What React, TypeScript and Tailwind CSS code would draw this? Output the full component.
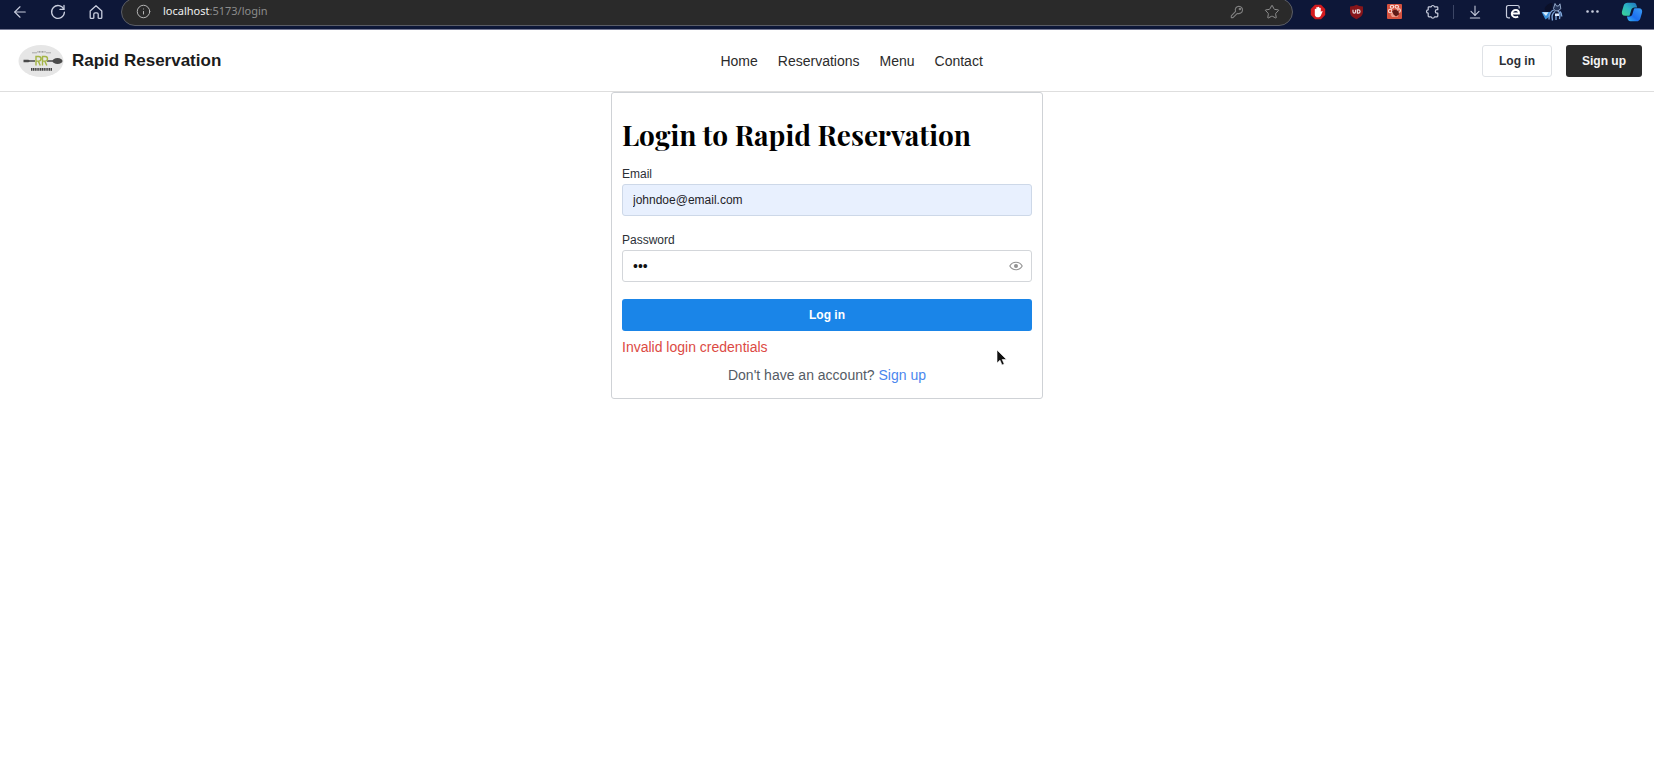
import { useState } from "react";
import type { ReactNode } from "react";
import { ArrowLeft, ArrowDownToLine, Ellipsis, Info, Star } from "lucide-react";

function ToolButton({ label, wide = false, children }: { label: string; wide?: boolean; children: ReactNode }) {
  return (
    <button
      type="button"
      aria-label={label}
      className={wide ? "flex w-10 shrink-0 items-center justify-center" : "flex w-[38px] shrink-0 items-center justify-center"}
    >
      {children}
    </button>
  );
}

function RefreshIcon() {
  return (
    <svg width="16" height="16" viewBox="0 0 16 16" fill="none" stroke="currentColor" strokeWidth="1.3" strokeLinecap="round" strokeLinejoin="round">
      <path d="M13.8 5.2A6.4 6.4 0 1 0 14.4 8.2" />
      <path d="M14 1.4v4h-4" />
    </svg>
  );
}

function HomeIcon() {
  return (
    <svg width="16" height="16" viewBox="0 0 16 16" fill="none" stroke="currentColor" strokeWidth="1.3" strokeLinejoin="round">
      <path d="M2.2 7 8 1.8 13.8 7v6.4a.9.9 0 0 1-.9.9h-2.1a.6.6 0 0 1-.6-.6v-3.4a1.4 1.4 0 0 0-1.4-1.4H7.2a1.4 1.4 0 0 0-1.4 1.4v3.4a.6.6 0 0 1-.6.6H3.1a.9.9 0 0 1-.9-.9z" />
    </svg>
  );
}

function KeyIcon() {
  return (
    <svg width="14" height="14" viewBox="0 0 14 14" fill="none" stroke="currentColor" strokeWidth="1.1" strokeLinejoin="round">
      <path d="M8.9 1.2a3.7 3.7 0 1 1-1.3 7.2L6.3 9.3 3 12.6H1.3V10.9L5.6 6.4A3.7 3.7 0 0 1 8.9 1.2z" />
      <circle cx="9.9" cy="4" r="0.7" />
    </svg>
  );
}

function EyeIcon() {
  return (
    <svg width="14" height="10" viewBox="0 0 14 10" fill="none" stroke="currentColor">
      <path d="M.8 5C2.2 2.500 4.400 1.300 7 1.300S11.800 2.500 13.200 5C11.800 7.500 9.600 8.700 7 8.700S2.200 7.500.8 5z" strokeWidth="1.100" />
      <circle cx="7" cy="5" r="2" fill="currentColor" stroke="none" />
    </svg>
  );
}

function HandIcon() {
  return (
    <svg width="16" height="16" viewBox="0 0 16 16">
      <path d="M5 .8h6L15.2 5v6L11 15.2H5L.8 11V5z" fill="#d31a1e" />
      <path d="M4.8 8.5V5.2a.8.8 0 0 1 1.5 0V3.6a.8.8 0 0 1 1.5 0V3.2a.8.8 0 0 1 1.5 0v1a.8.8 0 0 1 1.5 0V8l.8-.8c.5-.4 1.200 0 .9.600l-1.600 3.700c-.5 1.200-1.400 1.800-2.900 1.800C6 13.300 4.800 12 4.800 10.400z" fill="#fff" />
    </svg>
  );
}

function ShieldIcon() {
  return (
    <svg width="15" height="16" viewBox="0 0 15 16">
      <path d="M7.5.8C5.5 2 3.3 2.5 1 2.5v5c0 3.800 2.600 6 6.500 7.700C11.400 13.500 14 11.300 14 7.500v-5C11.700 2.500 9.500 2 7.500.8z" fill="#86151a" />
      <path d="M4 5.8v2a1.300 1.300 0 0 0 2.600 0v-2M8.400 5.800v3.300h1a1.650 1.650 0 0 0 0-3.300z" fill="none" stroke="#e8dada" strokeWidth="1.2" />
    </svg>
  );
}

function PawIcon() {
  return (
    <svg width="15" height="15" viewBox="0 0 15 15">
      <rect width="15" height="15" rx="1" fill="#d5523f" />
      <ellipse cx="5" cy="2.8" rx="1.7" ry="1.5" fill="none" stroke="#fbe3dc" strokeWidth="1.1" />
      <ellipse cx="9.8" cy="2.8" rx="1.7" ry="1.5" fill="none" stroke="#fbe3dc" strokeWidth="1.1" />
      <ellipse cx="3.2" cy="7" rx="1.7" ry="1.8" fill="none" stroke="#fbe3dc" strokeWidth="1.1" />
      <ellipse cx="12" cy="6.5" rx="1.4" ry="1.8" fill="none" stroke="#fbe3dc" strokeWidth="1.1" />
      <path d="M3.5 10.5 7 6l2-.5 3 4-1.5 3.500H5z" fill="#ef9d8c" />
      <path d="M5 7 8 5.500 11.500 7l.5 3.500-3 2L6.500 10.500z" fill="#5f1a16" />
    </svg>
  );
}

function PuzzleIcon() {
  return (
    <svg width="15" height="15" viewBox="0 0 15 15" fill="none" stroke="currentColor" strokeWidth="1.2" strokeLinejoin="round">
      <path d="M4 2.8h2.2a1.700 1.700 0 0 1 3.300 0H12a.8.8 0 0 1 .8.800v2.100H12a1.700 1.700 0 0 0 0 3.400h.8v2.900a.8.8 0 0 1-.8.800H9.500a1.700 1.700 0 0 1-3.300 0H4a.8.8 0 0 1-.8-.8V9.200a1.700 1.700 0 0 1 0-3.400V3.600A.8.8 0 0 1 4 2.800z" />
    </svg>
  );
}

function EdgeModeIcon() {
  return (
    <svg width="16" height="16" viewBox="0 0 16 16" fill="none">
      <path d="M5 13.8H3.2A1.700 1.700 0 0 1 1.500 12.100V3.200A1.700 1.700 0 0 1 3.200 1.500h9.300A1.700 1.700 0 0 1 14.200 3.200V4.500" stroke="#c9cede" strokeWidth="1.200" />
      <path d="M13.200 12.600c-3.200 1.400-6.400.3-6.400-2.500 0-2.300 1.800-4 4.100-4 2.100 0 3.300 1.200 3 3.300H7.800" stroke="#fff" strokeWidth="2" />
    </svg>
  );
}

function AvatarIcon() {
  return (
    <svg width="22" height="20" viewBox="0 0 22 20">
      <path d="M3.5 6.5C5 3 8 1 11.5 1L10 9 5 10z" fill="#0b1028" />
      <path d="M.6 10h8.900l-1.500 5-3.500 2.500z" fill="#3b92dd" />
      <path d="M1.500 10.300h6L5 14z" fill="#d5ecff" />
      <path d="M8 17.500c0-5 1.500-8.500 4.800-9.500M11.500 18.500c-1-4 0-7.500 2.500-9M15 13.500v4.500M18.500 17c.8-3.500.3-7-2-8.500M20.800 14.500c0-2-.6-4-1.800-5" fill="none" stroke="#7fa9dd" strokeWidth="1.3" />
      <path d="M12.500 6.500 14 1.500l1.500 2.500h2L19 1.800l.8 5-2.800 2h-3z" fill="#243458" stroke="#9fb6d6" strokeWidth=".9" />
      <path d="M14 11.500h4v2.500h-4z" fill="#dce9fa" />
    </svg>
  );
}

function CopilotIcon() {
  return (
    <svg width="22" height="20" viewBox="0 0 22 20">
      <defs>
        <linearGradient id="copilotLeft" x1="1" y1="0" x2="0" y2="1">
          <stop offset="0" stopColor="#1f6fc0" />
          <stop offset=".5" stopColor="#2bb5c4" />
          <stop offset="1" stopColor="#3cd58f" />
        </linearGradient>
        <linearGradient id="copilotRight" x1="1" y1="0" x2="0" y2="1">
          <stop offset="0" stopColor="#3b9df5" />
          <stop offset=".6" stopColor="#1c6ff0" />
          <stop offset="1" stopColor="#35b8f2" />
        </linearGradient>
      </defs>
      <path d="M6.500.8h6c2 0 2.700 1.200 3.200 3.200l.5 1.600h-2.700c-1.800 0-2.800 1-3.400 2.800L8.500 13.800H4.200c-2.700 0-3.900-2-3.200-4.600L2.700 3.600C3.300 1.700 4.500.8 6.500.8z" fill="url(#copilotLeft)" />
      <path d="M13.600 6.200h4.200c2.700 0 3.900 2 3.200 4.600l-1.700 5.600c-.6 1.900-1.800 2.800-3.800 2.800h-6c-2 0-2.700-1.200-3.200-3.200l-.4-1.600h2.600c1.600 0 2.500-1 3-2.700l1.200-3.900c.3-.9.500-1.400.9-1.600z" fill="url(#copilotRight)" />
    </svg>
  );
}

function BrowserBar() {
  return (
    <div className="flex h-[30px] items-start overflow-hidden border-b border-[#777b95] bg-[#0d1738] text-[#c9cede]">
      <div className="flex h-[23px] flex-1 items-center">
        <div className="flex w-[121px] shrink-0 pl-px">
          <ToolButton label="Back"><ArrowLeft size={18} strokeWidth={1.5} /></ToolButton>
          <ToolButton label="Refresh"><RefreshIcon /></ToolButton>
          <ToolButton label="Home"><HomeIcon /></ToolButton>
        </div>
        <div className="flex h-7 flex-1 shrink-0 items-center rounded-full border border-[#5a5d66] bg-[#2a2a2a] pr-3 pl-3.5 font-['Noto_Sans','Open_Sans',sans-serif] text-[11px]">
          <Info size={15} strokeWidth={1.6} className="mr-3 text-[#b5b5b5]" />
          <span className="text-[#f0f0f0]">localhost</span>
          <span className="flex-1 text-[#8c8c8c]">:5173/login</span>
          <span className="mr-5 text-[#808080]"><KeyIcon /></span>
          <Star size={16} strokeWidth={1.5} className="text-[#8f8f8f]" />
        </div>
        <div className="flex shrink-0 items-center pr-0.5 pl-1.5">
          <ToolButton label="Ad blocker"><HandIcon /></ToolButton>
          <ToolButton label="Content shield"><ShieldIcon /></ToolButton>
          <ToolButton label="Pet extension"><PawIcon /></ToolButton>
          <ToolButton label="Extensions"><PuzzleIcon /></ToolButton>
          <div className="mx-0.5 h-3.5 w-px bg-[#3c4665]" />
          <ToolButton label="Downloads"><ArrowDownToLine size={16} strokeWidth={1.6} /></ToolButton>
          <ToolButton label="Compatibility mode"><EdgeModeIcon /></ToolButton>
          <ToolButton label="Profile" wide><AvatarIcon /></ToolButton>
          <ToolButton label="More" wide><Ellipsis size={17} strokeWidth={1.8} /></ToolButton>
          <ToolButton label="Copilot" wide><CopilotIcon /></ToolButton>
        </div>
      </div>
    </div>
  );
}

function Logo() {
  return (
    <svg width="46" height="34" viewBox="0 0 46 34" role="img" aria-label="RR Reservations">
      <ellipse cx="23" cy="17" rx="22.5" ry="16" fill="#e6e6e6" />
      <path d="M14 8.8h5M28 8.8h5" stroke="#999" strokeWidth=".8" />
      <path d="M19.5 7.8h8" stroke="#888" strokeWidth="1.2" strokeDasharray="1 .5" />
      <path d="M6 17h11M29 17h8" stroke="#4a4a4a" strokeWidth="1.5" />
      <path d="M5.5 15.800h5l1.500 1.200-1.500 1.200h-5z" fill="#4a4a4a" />
      <ellipse cx="39.5" cy="17" rx="5" ry="3" fill="#4a4a4a" />
      <path d="M18 21.500v-9h2.700a2.300 2.300 0 0 1 0 4.600H18M20.300 17.100l2 4.400M24.500 21.500v-9h2.700a2.300 2.300 0 0 1 0 4.600h-2.700M26.800 17.100l2 4.400" fill="none" stroke="#a4b545" strokeWidth="1.4" />
      <path d="M13 25.300h21" stroke="#444" strokeWidth="2.8" strokeDasharray="1.3 .5" />
    </svg>
  );
}

const links = ["Home", "Reservations", "Menu", "Contact"];

function SiteHeader() {
  return (
    <header className="flex h-[62px] items-center justify-between border-b border-[#dedede] pr-3 pl-[18px]">
      <a href="#home" className="flex items-center gap-2 text-[17px] font-bold text-[#1c1c1c]">
        <Logo />
        Rapid Reservation
      </a>
      <nav className="flex gap-5 text-sm text-[#2b2b2b]">
        {links.map((link) => (
          <a key={link} href={"#" + link.toLowerCase()}>{link}</a>
        ))}
      </nav>
      <div className="flex gap-3.5 text-xs font-bold">
        <button type="button" className="h-8 rounded-[3px] border border-[#dfe2e6] px-4 text-[#2b2f36]">Log in</button>
        <button type="button" className="h-8 rounded-[3px] bg-[#2b2b2b] px-4 text-[#f4f4f4]">Sign up</button>
      </div>
    </header>
  );
}

function LoginCard() {
  const [email, setEmail] = useState("johndoe@email.com");
  const [password, setPassword] = useState("123");
  const [shown, setShown] = useState(false);

  return (
    <form onSubmit={(e) => e.preventDefault()} className="relative mx-auto w-full max-w-[432px] rounded-[3px] border border-[#cfd2d6] px-2.5 pt-[22px] pb-3">
      <h1 className="mb-2.5 font-['Playfair_Display','Liberation_Serif',serif] text-[28px] leading-10 font-bold text-black">Login to Rapid Reservation</h1>
      <label htmlFor="email" className="mb-px block text-xs leading-[18px] text-[#2b2f36]">Email</label>
      <input
        id="email"
        type="email"
        value={email}
        onChange={(e) => setEmail(e.target.value)}
        className="block h-8 w-full rounded-[3px] border border-[#cdd8e8] bg-[#e8f0fe] px-2.5 text-xs text-[#1f2328]"
      />
      <label htmlFor="password" className="mt-[15px] mb-px block text-xs leading-[18px] text-[#2b2f36]">Password</label>
      <div className="flex h-8 items-center rounded-[3px] border border-[#d3d6da] pr-2">
        <input
          id="password"
          type={shown ? "text" : "password"}
          value={password}
          onChange={(e) => setPassword(e.target.value)}
          className="h-full min-w-0 flex-1 px-2.5 text-sm text-[#111] outline-none"
        />
        <button type="button" aria-label="Show password" onClick={() => setShown(!shown)} className="text-[#929292]">
          <EyeIcon />
        </button>
      </div>
      <button type="submit" className="mt-[17px] block h-8 w-full rounded-[3px] bg-[#1a85e8] text-xs font-bold text-white">Log in</button>
      <p role="alert" className="mt-[5px] text-sm leading-[22px] text-[#dc4a44]">Invalid login credentials</p>
      <p className="mt-1.5 text-center text-sm leading-[22px] text-[#545b65]">
        Don&apos;t have an account? <a href="#signup" className="text-[#4a86ee]">Sign up</a>
      </p>
      <svg width="12" height="18" viewBox="0 0 12 18" aria-hidden="true" className="pointer-events-none absolute top-[256px] right-[34px]">
        <path d="M1 1v13l3-2.800 2 4.800 2.200-1-2-4.500h4.300z" fill="#111" stroke="#fff" strokeWidth=".6" />
      </svg>
    </form>
  );
}

export default function App() {
  return (
    <div className="min-h-screen bg-white font-['Liberation_Sans',Arial,sans-serif]">
      <BrowserBar />
      <SiteHeader />
      <main>
        <LoginCard />
      </main>
    </div>
  );
}
